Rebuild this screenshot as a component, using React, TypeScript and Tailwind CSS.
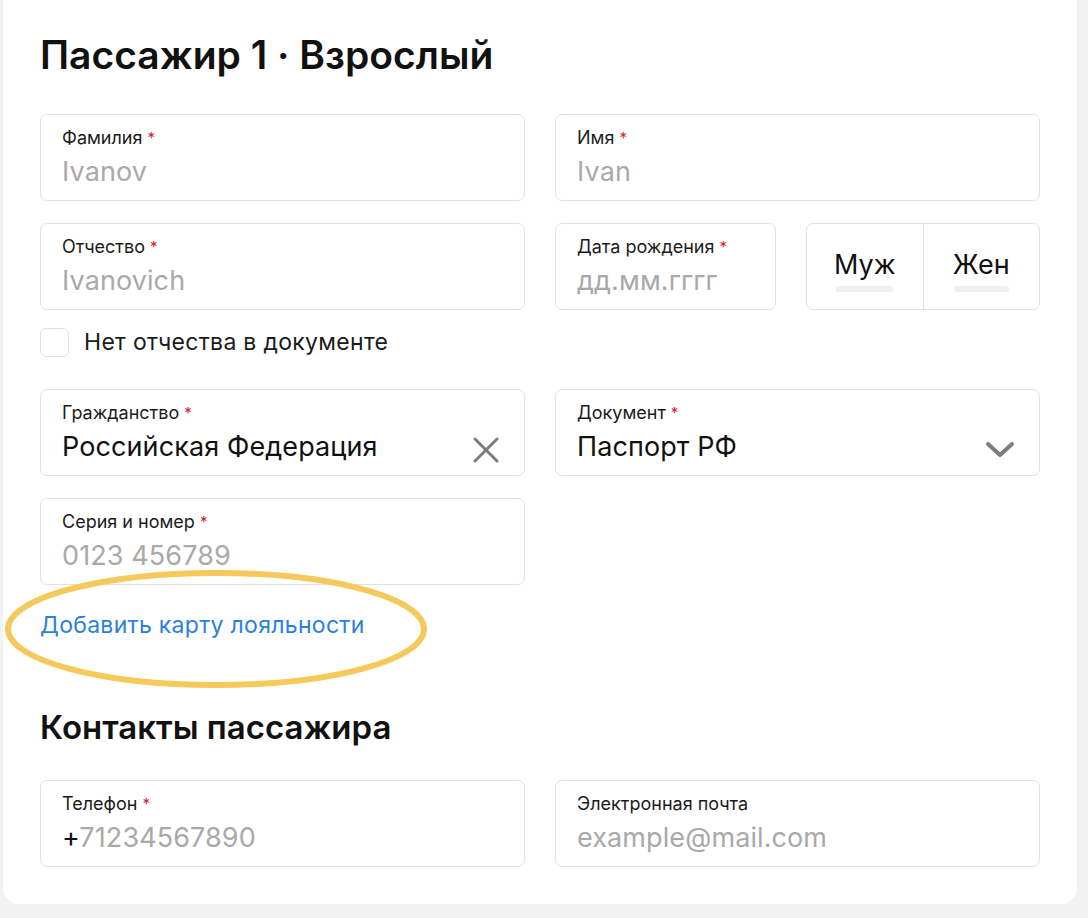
import React from 'react';

type FieldProps = {
  label: string;
  required?: boolean;
  value?: React.ReactNode;
  filled?: boolean;
  icon?: React.ReactNode;
  className?: string;
};

function Field({ label, required, value, filled, icon, className = '' }: FieldProps) {
  return (
    <div
      className={`relative flex h-[87px] flex-col rounded-[7px] border border-[#e1e1e1] bg-white pl-[21px] pr-[24px] pt-[11px] ${className}`}
    >
      <div className="text-[18px] leading-[24px] text-[#1b1b1b]">
        {label}
        {required && <span className="ml-[5px] align-top text-[15px] text-[#d4202a]">*</span>}
      </div>
      <div
        className={`mt-[6px] text-[27px] leading-[32px] tracking-[0.1px] ${filled ? 'text-[#111]' : 'text-[#a9a9a9]'}`}
      >
        {value}
      </div>
      {icon && <div className="absolute right-[24px] top-1/2 -translate-y-[2px]">{icon}</div>}
    </div>
  );
}

const CloseIcon = () => (
  <svg width="28" height="28" viewBox="0 0 28 28" className="mt-[5px]">
    <path d="M3 3 L25 25 M25 3 L3 25" stroke="#7c7c7c" strokeWidth="3" strokeLinecap="round" />
  </svg>
);

const ChevronIcon = () => (
  <svg width="30" height="18" viewBox="0 0 30 18" className="mt-[10px]">
    <path d="M3 3 L15 14 L27 3" stroke="#7c7c7c" strokeWidth="4" fill="none" strokeLinecap="round" strokeLinejoin="round" />
  </svg>
);

export default function App() {
  return (
    <div
      className="min-h-[918px] w-full bg-[#f2f2f2] pl-[3px] pr-[11px]"
      style={{ fontFamily: 'Inter, "Noto Sans", sans-serif' }}
    >
      <div className="rounded-b-[16px] bg-white pb-[37px] pl-[37px] pr-[37px] pt-[29px]">
        <h1 className="text-[39px] font-semibold leading-[52px] text-[#111]">
          Пассажир 1 · Взрослый
        </h1>

        <div className="mt-[33px] grid grid-cols-2 gap-x-[30px]">
          <Field label="Фамилия" required value="Ivanov" />
          <Field label="Имя" required value="Ivan" />
        </div>

        <div className="mt-[22px] grid grid-cols-2 gap-x-[30px]">
          <Field label="Отчество" required value="Ivanovich" />
          <div className="flex gap-x-[30px]">
            <Field label="Дата рождения" required value="дд.мм.гггг" className="w-[221px] shrink-0" />
            <div className="flex h-[87px] flex-1 rounded-[7px] border border-[#e1e1e1]">
              <div className="flex flex-1 flex-col items-center justify-center border-r border-[#e1e1e1]">
                <div className="mt-[7px] text-[27px] leading-[32px] text-[#111]">Муж</div>
                <div className="mt-[5px] h-[6px] w-[57px] rounded-full bg-[#efefef]" />
              </div>
              <div className="flex flex-1 flex-col items-center justify-center">
                <div className="mt-[7px] text-[27px] leading-[32px] text-[#111]">Жен</div>
                <div className="mt-[5px] h-[6px] w-[55px] rounded-full bg-[#efefef]" />
              </div>
            </div>
          </div>
        </div>

        <label className="mt-[17px] flex items-center gap-[15px]">
          <span className="h-[29px] w-[29px] rounded-[6px] border border-[#dedede] bg-white" />
          <span className="text-[23px] leading-[30px] tracking-[0.3px] text-[#1b1b1b]">
            Нет отчества в документе
          </span>
        </label>

        <div className="mt-[32px] grid grid-cols-2 gap-x-[30px]">
          <Field label="Гражданство" required value="Российская Федерация" filled icon={<CloseIcon />} />
          <Field label="Документ" required value="Паспорт РФ" filled icon={<ChevronIcon />} />
        </div>

        <div className="mt-[22px] grid grid-cols-2 gap-x-[30px]">
          <Field label="Серия и номер" required value="0123 456789" />
        </div>

        <div className="relative mt-[25px]">
          <a className="text-[23px] leading-[30px] tracking-[0.3px] text-[#2b7fe0]">Добавить карту лояльности</a>
          <svg
            className="pointer-events-none absolute left-[-37px] top-[-41px]"
            width="430"
            height="122"
            viewBox="0 0 430 122"
          >
            <ellipse cx="213" cy="60" rx="208" ry="56" fill="none" stroke="#f6c95c" strokeWidth="6" />
          </svg>
        </div>

        <h2 className="mt-[66px] text-[33px] font-semibold leading-[42px] text-[#111]">Контакты пассажира</h2>

        <div className="mt-[32px] grid grid-cols-2 gap-x-[30px]">
          <Field
            label="Телефон"
            required
            value={
              <>
                <span className="text-[#111]">+</span>71234567890
              </>
            }
          />
          <Field label="Электронная почта" value="example@mail.com" />
        </div>
      </div>
    </div>
  );
}
